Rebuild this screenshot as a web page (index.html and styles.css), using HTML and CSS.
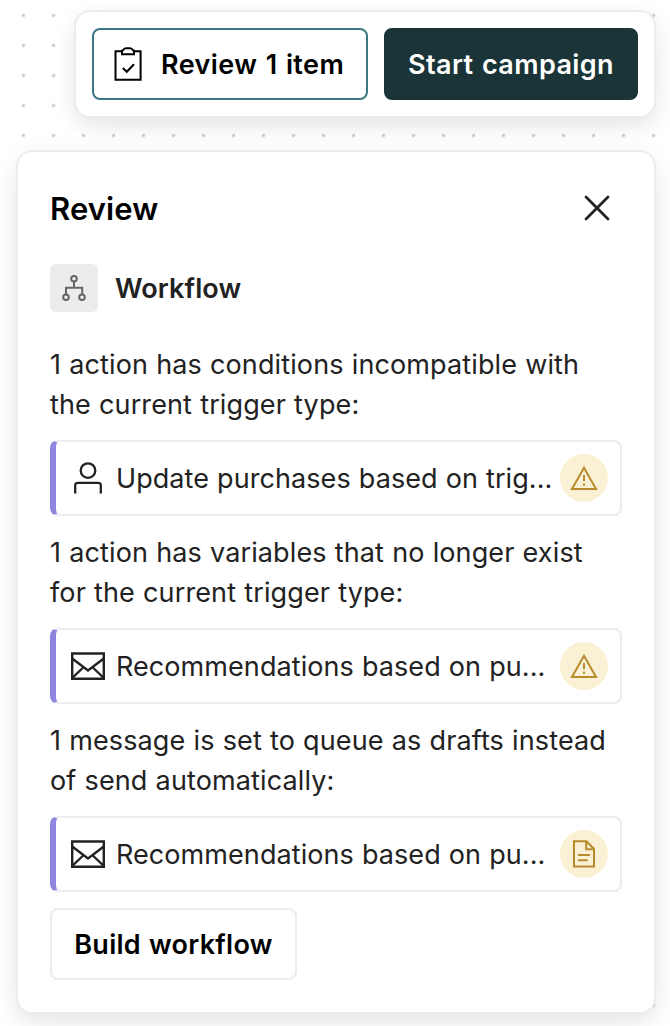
FILE: index.html
```html
<!DOCTYPE html>
<html lang="en">
  <head>
    <meta charset="UTF-8" />
    <title>Review campaign</title>
    <link rel="stylesheet" href="styles.css">
  </head>
  <body>
    <div class="toolbar">
      <button class="btn btn-review">
        <svg width="32" height="36" viewBox="0 0 32 36" fill="none" stroke="currentColor" stroke-width="2">
          <path d="M10 5.300H3.500V33.700H28.600V5.300H22" />
          <path d="M10 8.300V5.200Q10 4.300 11 4.300Q12 2.300 14 2.300H18Q20 2.300 21 4.300Q22 4.300 22 5.200V8.300Z" />
          <path d="M11.300 22.600L14.800 25.800L21.500 18.800" stroke-linecap="round" />
        </svg>
        <span>Review 1 item</span>
      </button>
      <button class="btn btn-start"><span>Start campaign</span></button>
    </div>

    <div class="panel">
      <div class="panel-header">
        <h2>Review</h2>
        <button class="close">
          <svg width="26" height="26" viewBox="0 0 26 26" fill="none" stroke="#222" stroke-width="2.800" stroke-linecap="round">
            <path d="M2 2L24 24M24 2L2 24" />
          </svg>
        </button>
      </div>

      <div class="section-title">
        <div class="section-icon">
          <svg width="24" height="28" viewBox="0 0 24 28" fill="none" stroke="#666" stroke-width="2">
            <circle cx="12" cy="4.700" r="2.800" />
            <circle cx="4" cy="23.300" r="2.800" />
            <circle cx="20" cy="23.300" r="2.800" />
            <path d="M12 7.500V13.700M4 20.500V13.700H20.200V20.500" />
          </svg>
        </div>
        <h3>Workflow</h3>
      </div>

      <p>1 action has conditions incompatible with<br />the current trigger type:</p>
      <div class="item">
        <svg class="item-icon" width="36" height="36" viewBox="0 0 36 36" fill="none" stroke="#222" stroke-width="2.300">
          <circle cx="18" cy="10.600" r="7.300" />
          <path d="M5.200 33.600V25.500Q5.200 22.900 7.800 22.900H28.200Q30.800 22.900 30.800 25.500V33.600" />
        </svg>
        <span class="item-name">Update purchases based on trig...</span>
        <span class="badge">
          <svg width="28" height="28" viewBox="0 0 28 28" fill="none" stroke="#b98a2c" stroke-width="2">
            <path d="M14 3.700L26 25H2Z" />
            <path d="M14 11V17M14 19.500V21.700" />
          </svg>
        </span>
      </div>

      <p>1 action has variables that no longer exist<br />for the current trigger type:</p>
      <div class="item">
        <svg class="item-icon" width="36" height="36" viewBox="0 0 36 36" fill="none" stroke="#222" stroke-width="2.400">
          <path d="M2.200 5.500H33.800V30.700H2.200Z" />
          <path d="M2.200 10.500L18 22.500L33.800 10.500M2.200 30L13.200 19.500M33.800 30L22.800 19.500" />
        </svg>
        <span class="item-name">Recommendations based on pu...</span>
        <span class="badge">
          <svg width="28" height="28" viewBox="0 0 28 28" fill="none" stroke="#b98a2c" stroke-width="2">
            <path d="M14 3.700L26 25H2Z" />
            <path d="M14 11V17M14 19.500V21.700" />
          </svg>
        </span>
      </div>

      <p>1 message is set to queue as drafts instead<br />of send automatically:</p>
      <div class="item">
        <svg class="item-icon" width="36" height="36" viewBox="0 0 36 36" fill="none" stroke="#222" stroke-width="2.400">
          <path d="M2.200 5.500H33.800V30.700H2.200Z" />
          <path d="M2.200 10.500L18 22.500L33.800 10.500M2.200 30L13.200 19.500M33.800 30L22.800 19.500" />
        </svg>
        <span class="item-name">Recommendations based on pu...</span>
        <span class="badge">
          <svg width="28" height="28" viewBox="0 0 28 28" fill="none" stroke="#b98a2c" stroke-width="2">
            <path d="M4 1.300H16.500L24 9V26.600H4Z" />
            <path d="M16.200 1.300V9.200H24M8 15H20M8 20.300H17.700" />
          </svg>
        </span>
      </div>

      <button class="btn btn-build"><span>Build workflow</span></button>
    </div>
  </body>
</html>
```

FILE: styles.css
```css
* {
  box-sizing: border-box;
}

body {
  margin: 0;
  padding: 12px 16px 0 18px;
  height: 1026px;
  overflow: hidden;
  display: flex;
  flex-direction: column;
  gap: 36px;
  font-family: Inter, sans-serif;
  color: #222;
  background-color: #fff;
  background-image: radial-gradient(circle, #bccacb 1.3px, transparent 1.9px);
  background-size: 30px 30px;
  background-position: 8.5px 0.5px;
}

h2,
h3,
p {
  margin: 0;
}

.toolbar,
.panel {
  background-color: #fff;
  border-radius: 14px;
  box-shadow: 0 0 0 2px #ececec, 0 8px 24px rgba(0, 0, 0, 0.12);
}

.toolbar {
  align-self: flex-end;
  display: flex;
  gap: 16px;
  padding: 16px;
}

.btn {
  display: flex;
  align-items: center;
  justify-content: center;
  height: 72px;
  padding: 0;
  border: 2px solid #ececec;
  border-radius: 8px;
  background-color: #fff;
  color: #000;
  font-family: inherit;
  font-size: 27px;
  font-weight: 600;
  letter-spacing: 0.4px;
  word-spacing: 1.2px;
  white-space: nowrap;
}

.btn-review {
  justify-content: flex-start;
  width: 276px;
  padding-left: 18px;
  gap: 17px;
  border-color: #3b7882;
}

.btn-start {
  width: 254px;
  border-color: #1a3438;
  background-color: #1a3438;
  color: #fff;
}

.btn-build {
  width: 247px;
  margin-top: 16px;
  letter-spacing: 0.3px;
  word-spacing: 0.8px;
}

.panel {
  width: 636px;
  height: 860px;
  padding: 32px;
}

.panel-header {
  display: flex;
  align-items: center;
  justify-content: space-between;
  height: 48px;
}

.panel-header h2 {
  color: #000;
  font-size: 31px;
  font-weight: 600;
  letter-spacing: 0.1px;
}

.close {
  display: flex;
  padding: 0;
  margin-right: 12px;
  border: none;
  background: none;
}

.section-title {
  display: flex;
  align-items: center;
  gap: 17px;
  margin: 32px 0;
}

.section-title h3 {
  font-size: 27px;
  font-weight: 600;
  letter-spacing: 0.1px;
}

.section-icon {
  display: flex;
  align-items: center;
  justify-content: center;
  width: 48px;
  height: 48px;
  border-radius: 6px;
  background-color: #ececec;
}

.panel p,
.item-name {
  font-size: 27px;
  line-height: 40px;
  letter-spacing: 0.12px;
  word-spacing: 0.4px;
  white-space: nowrap;
}

.panel p {
  height: 80px;
  padding-top: 1px;
}

.item {
  display: flex;
  align-items: center;
  height: 76px;
  margin: 16px 0;
  padding: 0 12px 0 14px;
  border: 2px solid #ececec;
  border-left: 6px solid #8e85e0;
  border-radius: 8px;
}

.item-icon {
  flex: none;
  margin-right: 10px;
}

.item-name {
  flex: 1;
  padding-top: 2px;
  letter-spacing: 0.07px;
}

.badge {
  display: flex;
  align-items: center;
  justify-content: center;
  flex: none;
  width: 48px;
  height: 48px;
  border-radius: 50%;
  background-color: #faf1d5;
}
```
